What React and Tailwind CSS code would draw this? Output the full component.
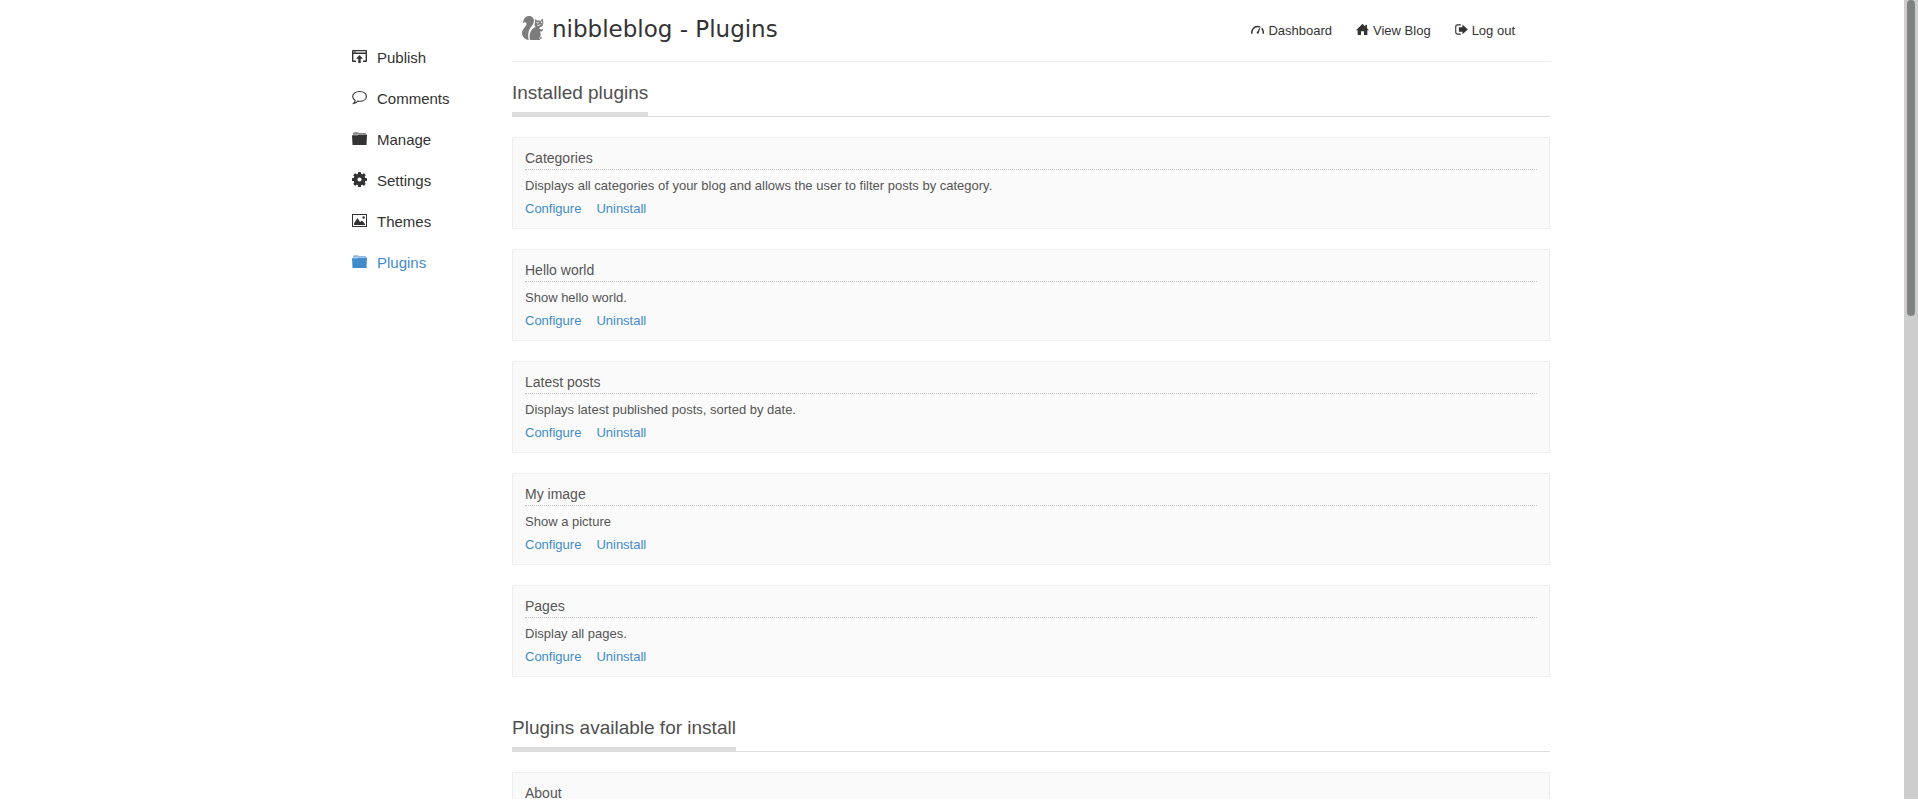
const ink = "text-[#333333]";

function Icon({ children, className, viewBox = "0 0 15 15" }) {
  return (
    <svg aria-hidden="true" viewBox={viewBox} className={`shrink-0 ${className}`} fill="currentColor">
      {children}
    </svg>
  );
}

const navIcon = "mb-1 h-[15px] w-[15px]";
const linkIcon = "mb-0.5 h-[13px] w-[13px]";

const PublishIcon = () => (
  <Icon className={navIcon}>
    <path fillRule="evenodd" d="M1 1h13a1 1 0 0 1 1 1v10a1 1 0 0 1-1 1h-3v-1.400h2.600V5H1.400v6.600H4V13H1a1 1 0 0 1-1-1V2a1 1 0 0 1 1-1zm.4 1.200v1.300h1V2.200zm2 0v1.300h10.200V2.200z" />
    <path d="M7.500 6 11 9.800H8.700V14H6.300V9.800H4z" />
  </Icon>
);

const CommentIcon = () => (
  <Icon className={navIcon}>
    <path
      d="M7.700 1.500c3.900 0 6.700 2.100 6.700 4.900s-2.800 4.900-6.700 4.900c-.7 0-1.400-.1-2-.2-1.100 1.300-2.400 2.200-4.100 2.400 1-.9 1.500-2 1.500-3.300C1.600 9.300.7 8 .7 6.400c0-2.800 3-4.900 7-4.900z"
      fill="none"
      stroke="currentColor"
      strokeWidth="1.100"
    />
  </Icon>
);

const FolderIcon = () => (
  <Icon className={navIcon}>
    <path d="M0 4.200h5.500l1-.8H15L14.500 14H.5z" />
    <path opacity=".6" d="M1 3.400V2.200L2 1.200h4l1 .9h6.500l.7 1H6.200l-.8.600H1z" />
  </Icon>
);

const gearTeeth = [0, 45, 90, 135, 180, 225, 270, 315];

const GearIcon = () => (
  <Icon className={navIcon}>
    <circle cx="7.500" cy="7.500" r="4" fill="none" stroke="currentColor" strokeWidth="3.800" />
    {gearTeeth.map((angle) => (
      <rect key={angle} x="6" y="0" width="3" height="3" rx=".6" transform={`rotate(${angle} 7.500 7.500)`} />
    ))}
  </Icon>
);

const PictureIcon = () => (
  <Icon className={navIcon}>
    <path fillRule="evenodd" d="M0 1h15v13H0zm1 1v11h13V2z" />
    <path d="M2 12v-1.500L5.300 5l2.900 4 1.600-1.500L13 11v1z" />
    <circle cx="11.600" cy="4.500" r="1.200" />
  </Icon>
);

const GaugeIcon = () => (
  <Icon className={linkIcon} viewBox="0 0 14 14">
    <path
      d="M.8 11.500C.8 7 3.200 3.700 7 3.700c1 0 1.800.2 2.500.5M11.600 5.600c1.200 1.400 1.700 3.500 1.700 5.900"
      fill="none"
      stroke="currentColor"
      strokeWidth="1.600"
    />
    <path d="M10.600 3.300 8.300 10.800c-.4 1.100-2.300.8-2.200-.5z" />
  </Icon>
);

const HomeIcon = () => (
  <Icon className={linkIcon} viewBox="0 0 14 14">
    <path d="M7 .8 14 7.800h-1.800V13H8.600V9H5.400v4H1.800V7.800H0z" />
    <path d="M10 2h1.900v4H10z" />
  </Icon>
);

const LogoutIcon = () => (
  <Icon className={linkIcon} viewBox="0 0 14 14">
    <path d="M8 1.700 13.800 7 8 12.200V9.500H4.200v-5H8z" />
    <path d="M6.200 2H3C1.500 2 .8 2.700.8 4v6c0 1.300.7 2 2.200 2h3.200" fill="none" stroke="currentColor" strokeWidth="1.200" />
  </Icon>
);

const SquirrelLogo = () => (
  <svg aria-hidden="true" viewBox="0 0 22 25" className="h-[25px] w-[22px] shrink-0 text-[#7c7c7c]" fill="currentColor">
    <path d="M6.800 24C2.700 23.600 0 20.600 0 17.100c0-2.900 1.900-4.600 3.300-6.300C4.600 9.200 5 7.700 4 6.700 3.200 5.900 1.900 6.300 1.300 7.600.7 4 3 .3 6.800.1c3.800-.2 5.700 2.900 5 6-.6 3.100-3.700 5.300-4.800 8.500-1 3-1.100 6.300-.2 9.400z" />
    <path d="M8 24c-1-5 .2-9.200 3.200-11.700.8-.7 1.700-1 2.600-1.300-1-.8-1.500-2-1.100-3.300.2-.9.800-1.500 0-4.600 1.200.3 2 .9 2.600 1.600.9-.3 2.100-.2 3.200.2L20.300 2.600c1.100 1.700 1.300 3.900.7 5.900-.6 1.700-1.800 2.700-3.300 2.900l-.6 1.200c1 .9 2.500 1 3.900.4.300 1.500-.9 2.700-3 2.600 1.300 2.600.9 5.200-1 6.700l1.200.6c.3.500 0 1.100-.6 1.100z" />
    <path
      d="M14.300 5.900c.6 1.300 1.900 1.300 2.700.5M15.300 9.300c1.100.5 2.300-.1 3-1.100M19.300 5.200l.4 2"
      fill="none"
      stroke="#ffffff"
      strokeWidth="1"
    />
    <circle cx="18.900" cy="22" r=".9" />
  </svg>
);

const sections = [
  { label: "Publish", icon: PublishIcon },
  { label: "Comments", icon: CommentIcon },
  { label: "Manage", icon: FolderIcon },
  { label: "Settings", icon: GearIcon },
  { label: "Themes", icon: PictureIcon },
  { label: "Plugins", icon: FolderIcon, active: true },
];

const shortcuts = [
  { label: "Dashboard", icon: GaugeIcon },
  { label: "View Blog", icon: HomeIcon },
  { label: "Log out", icon: LogoutIcon },
];

const installed = [
  { name: "Categories", text: "Displays all categories of your blog and allows the user to filter posts by category." },
  { name: "Hello world", text: "Show hello world." },
  { name: "Latest posts", text: "Displays latest published posts, sorted by date." },
  { name: "My image", text: "Show a picture" },
  { name: "Pages", text: "Display all pages." },
];

function SectionTitle({ children }) {
  return (
    <h2 className="flex border-b border-[#dddddd] text-[19px] leading-6 text-[#4f4f4f]">
      <span className="border-b-4 border-[#dddddd] pb-[7px]">{children}</span>
    </h2>
  );
}

function PluginCard({ name, children }) {
  return (
    <article className="min-h-[92px] border border-[#eeeeee] bg-[#fafafa] px-3 pt-2.5 text-[13px] leading-[23px] text-[#555555]">
      <h3 className="mb-1 border-b border-dotted border-[#c4c4c4] pb-px text-sm leading-5">{name}</h3>
      {children}
    </article>
  );
}

export default function App() {
  return (
    <div className="flex h-screen overflow-hidden bg-white pb-0.5 font-['Liberation_Sans',Arial,sans-serif]">
      <div className="min-w-0 flex-1 overflow-hidden">
        <div className="mx-auto flex max-w-[1200px]">
          <nav aria-label="Main" className="w-40 shrink-0 pt-12">
            <ul className="flex flex-col gap-[21px]">
              {sections.map(({ label, icon: Glyph, active }) => (
                <li key={label}>
                  <a
                    href="#"
                    className={`flex items-center gap-2.5 text-[15px] leading-5 ${active ? "text-[#428bca]" : ink}`}
                  >
                    <Glyph />
                    {label}
                  </a>
                </li>
              ))}
            </ul>
          </nav>

          <div className="mr-0.5 min-w-0 flex-1">
            <header className="flex h-[62px] items-center justify-between border-b border-[#eeeeee] pb-1 pl-2.5 pr-[35px]">
              <h1 className={`flex items-center gap-2 font-['DejaVu_Sans',sans-serif] text-[23px] leading-8 ${ink}`}>
                <SquirrelLogo />
                nibbleblog - Plugins
              </h1>
              <ul className={`flex gap-6 pt-1 text-[13px] leading-5 ${ink}`}>
                {shortcuts.map(({ label, icon: Glyph }) => (
                  <li key={label}>
                    <a href="#" className="flex items-center gap-1">
                      <Glyph />
                      {label}
                    </a>
                  </li>
                ))}
              </ul>
            </header>

            <main>
              <section className="pt-[19px]">
                <SectionTitle>Installed plugins</SectionTitle>
                <div className="mt-5 flex flex-col gap-5">
                  {installed.map(({ name, text }) => (
                    <PluginCard key={name} name={name}>
                      <p>{text}</p>
                      <p className="flex gap-[15px] text-[#428bca]">
                        <a href="#">Configure</a>
                        <a href="#">Uninstall</a>
                      </p>
                    </PluginCard>
                  ))}
                </div>
              </section>

              <section className="pt-[39px]">
                <SectionTitle>Plugins available for install</SectionTitle>
                <div className="mt-5">
                  <PluginCard name="About" />
                </div>
              </section>
            </main>
          </div>
        </div>
      </div>

      <div aria-hidden="true" className="w-3.5 shrink-0 bg-[#cdcdcd] px-[3px]">
        <div className="h-[316px] rounded-full bg-[#7e8382]" />
      </div>
    </div>
  );
}
